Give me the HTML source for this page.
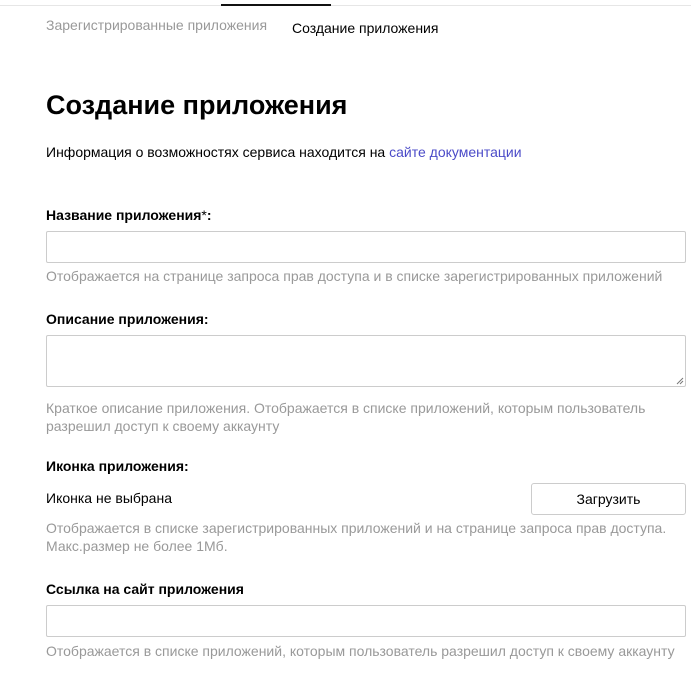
<!DOCTYPE html><html><head><meta charset="utf-8"><style>
body{margin:0;width:691px;height:686px;background:#fff;font-family:"Liberation Sans",Arial,sans-serif;position:relative;overflow:hidden;color:#000}
.a{position:absolute;white-space:nowrap}
.g{color:#999;font-size:14px}
.l{font-weight:bold;font-size:14px}
.in{position:absolute;left:46px;width:638px;border:1px solid #ccc;border-radius:2px;background:#fff}
</style></head><body>
<div class="a" style="left:0;top:5px;width:691px;height:1px;background:#e6e6e6"></div>
<div class="a" style="left:221px;top:4px;width:110px;height:2px;background:#111"></div>
<div class="a" style="left:46px;top:17px;font-size:14px;color:#999">Зарегистрированные приложения</div>
<div class="a" style="left:292px;top:20px;font-size:14px">Создание приложения</div>
<div class="a" style="left:46px;top:90px;font-size:27px;font-weight:bold">Создание приложения</div>
<div class="a" style="left:46px;top:144px;font-size:14px">Информация о возможностях сервиса находится на <span style="color:#4b4bc8">сайте документации</span></div>
<div class="a l" style="left:46px;top:207px">Название приложения<span style="font-weight:normal">*</span>:</div>
<div class="in" style="top:231px;height:30px"></div>
<div class="a g" style="left:46px;top:268px">Отображается на странице запроса прав доступа и в списке зарегистрированных приложений</div>
<div class="a l" style="left:46px;top:311px">Описание приложения:</div>
<div class="in" style="top:335px;height:50px"><svg style="position:absolute;right:1px;bottom:1px" width="8" height="8"><path d="M1 7L7 1M4 7L7 4" stroke="#777" stroke-width="1"/></svg></div>
<div class="a g" style="left:46px;top:399px;line-height:18px;white-space:normal;width:640px">Краткое описание приложения. Отображается в списке приложений, которым пользователь разрешил доступ к своему аккаунту</div>
<div class="a l" style="left:46px;top:458px">Иконка приложения:</div>
<div class="a" style="left:46px;top:490px;font-size:14px">Иконка не выбрана</div>
<div class="a" style="left:531px;top:483px;width:153px;height:30px;border:1px solid #ccc;border-radius:3px;text-align:center;line-height:30px;font-size:14px">Загрузить</div>
<div class="a g" style="left:46px;top:519px;line-height:18px;white-space:normal;width:640px">Отображается в списке зарегистрированных приложений и на странице запроса прав доступа. Макс.размер не более 1Мб.</div>
<div class="a l" style="left:46px;top:581px">Ссылка на сайт приложения</div>
<div class="in" style="top:605px;height:30px"></div>
<div class="a g" style="left:46px;top:643px">Отображается в списке приложений, которым пользователь разрешил доступ к своему аккаунту</div>
</body></html>
